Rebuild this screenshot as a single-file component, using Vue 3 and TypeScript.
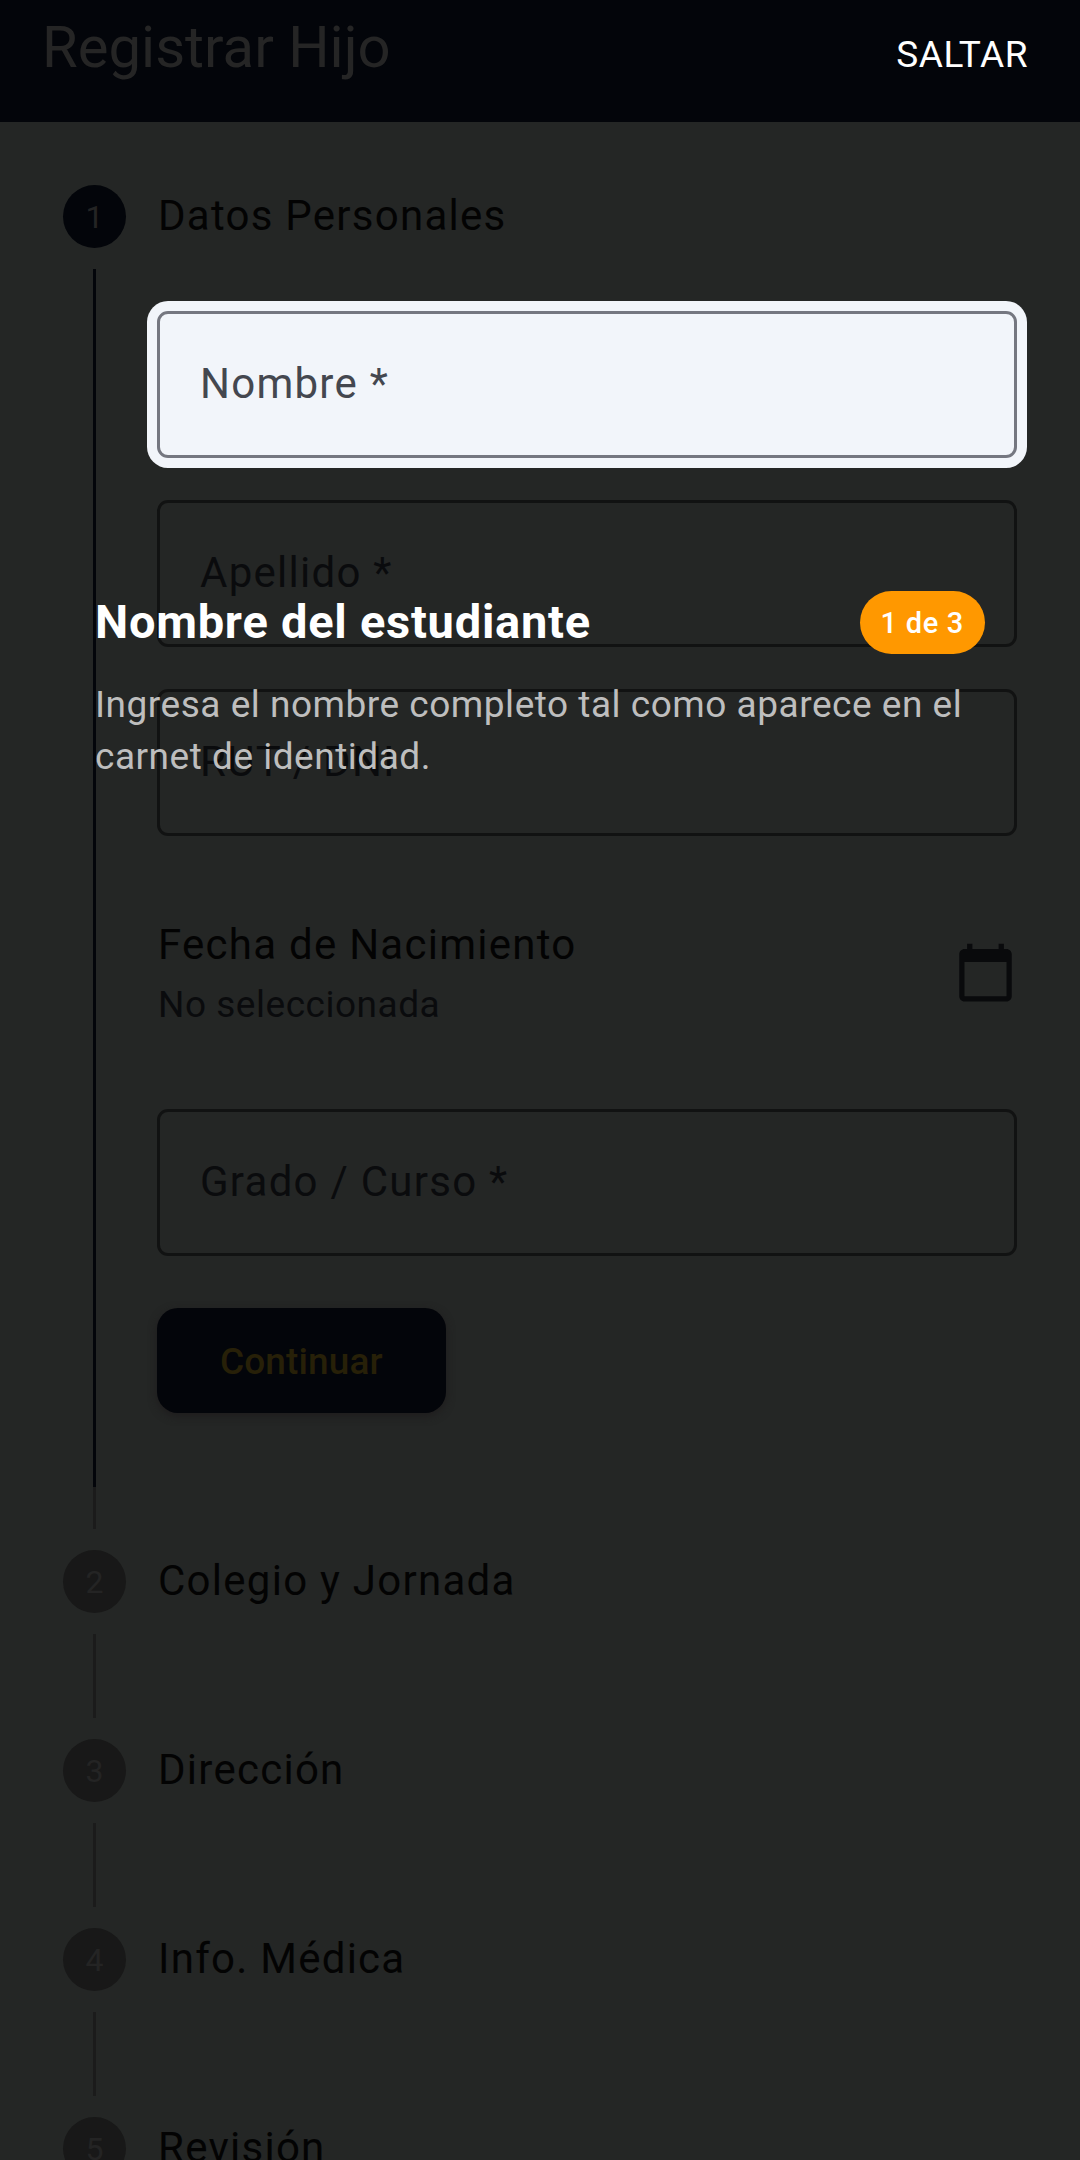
<script setup lang="ts">
import { ref } from 'vue'

interface Field {
  id: string
  label: string
  spotlight?: boolean
}

const identityFields: Field[] = [
  { id: 'nombre', label: 'Nombre *', spotlight: true },
  { id: 'apellido', label: 'Apellido *' },
  { id: 'rut', label: 'RUT / DNI' },
]
const gradeField: Field = { id: 'grado', label: 'Grado / Curso *' }

const pendingSteps: string[] = ['Colegio y Jornada', 'Dirección', 'Info. Médica', 'Revisión']

const values = ref<Record<string, string>>({ nombre: '', apellido: '', rut: '', grado: '' })
</script>

<template>
  <div class="page">
    <header class="bar">
      <h1 class="bar-title">Registrar Hijo</h1>
      <button type="button" class="skip">SALTAR</button>
    </header>

    <main>
      <ol class="stepper">
        <li>
          <div class="step-head">
            <div class="rail">
              <span class="line hidden"></span>
              <span class="circle active">1</span>
              <span class="line active"></span>
            </div>
            <h2 class="step-title">Datos Personales</h2>
          </div>
          <div class="step-body">
            <div class="rail"><span class="line active"></span></div>
            <form class="form" @submit.prevent>
              <div
                v-for="f in identityFields"
                :key="f.id"
                class="field"
                :class="{ spotlight: f.spotlight }"
              >
                <input :id="f.id" v-model="values[f.id]" type="text" />
                <label :for="f.id">{{ f.label }}</label>
              </div>
              <button type="button" class="date">
                <span class="date-text">
                  <span class="date-title">Fecha de Nacimiento</span>
                  <span class="date-value">No seleccionada</span>
                </span>
                <svg class="calendar" viewBox="0 0 24 24" aria-hidden="true">
                  <path
                    d="M20 3h-1V1h-2v2H7V1H5v2H4c-1.1 0-2 .9-2 2v16c0 1.1.9 2 2 2h16c1.1 0 2-.9 2-2V5c0-1.1-.9-2-2-2zm0 18H4V8h16v13z"
                  />
                </svg>
              </button>
              <div class="field">
                <input :id="gradeField.id" v-model="values[gradeField.id]" type="text" />
                <label :for="gradeField.id">{{ gradeField.label }}</label>
              </div>
              <button type="submit" class="continue">Continuar</button>
            </form>
          </div>
        </li>
        <li v-for="(title, i) in pendingSteps" :key="title">
          <div class="step-head">
            <div class="rail">
              <span class="line"></span>
              <span class="circle">{{ i + 2 }}</span>
              <span class="line" :class="{ hidden: i === pendingSteps.length - 1 }"></span>
            </div>
            <h2 class="step-title">{{ title }}</h2>
          </div>
        </li>
      </ol>
    </main>

    <aside class="coach" role="dialog" aria-labelledby="coach-title">
      <div class="coach-head">
        <h2 id="coach-title" class="coach-title">Nombre del estudiante</h2>
        <span class="chip">1 de 3</span>
      </div>
      <p class="coach-text">Ingresa el nombre completo tal como aparece en el carnet de identidad.</p>
    </aside>
  </div>
</template>

<style>
body {
  margin: 0;
  background: #242625;
}
</style>

<style scoped>
.page {
  position: relative;
  height: 100vh;
  overflow: hidden;
  background: #242625;
  font-family: Roboto, 'Liberation Sans', sans-serif;
}

h1,
h2,
p,
ol {
  margin: 0;
  padding: 0;
  font-weight: 400;
}

button {
  border: 0;
  padding: 0;
  background: none;
  font: inherit;
  color: inherit;
  cursor: pointer;
}

.bar {
  display: flex;
  align-items: baseline;
  justify-content: space-between;
  box-sizing: border-box;
  height: 122px;
  padding: 0 52px 0 42px;
  background: #03050a;
}

.bar-title {
  font-size: 58px;
  line-height: 94px;
  color: #252525;
}

.skip {
  font-size: 37px;
  line-height: 52px;
  letter-spacing: 0.014em;
  color: #fff;
}

.stepper {
  list-style: none;
}

.step-head,
.step-body {
  display: flex;
  gap: 31px;
  padding: 0 63px;
}

.step-head {
  gap: 32px;
  height: 189px;
  align-items: center;
}

.rail {
  display: flex;
  flex: none;
  flex-direction: column;
  align-items: center;
  align-self: stretch;
  width: 63px;
}

.line {
  flex: 1;
  width: 3px;
  background: #1b1b1b;
}

.line.active {
  background: #03050a;
}

.line.hidden {
  visibility: hidden;
}

.circle {
  width: 63px;
  height: 63px;
  margin: 21px 0;
  border-radius: 50%;
  background: #181818;
  color: #242424;
  font-size: 32px;
  line-height: 65px;
  text-align: center;
}

.circle.active {
  background: #03050a;
}

.step-title {
  padding-bottom: 2px;
  font-size: 42px;
  line-height: 63px;
  letter-spacing: 0.03em;
  color: #030303;
}

.form {
  display: flex;
  flex: 1;
  flex-direction: column;
  gap: 42px;
  padding-bottom: 74px;
}

.field {
  display: grid;
  align-items: center;
  height: 147px;
  border-radius: 11px;
}

.field input,
.field label {
  grid-area: 1 / 1;
}

.field input {
  box-sizing: border-box;
  width: 100%;
  height: 100%;
  padding: 0 40px;
  border: 3px solid #111212;
  border-radius: 11px;
  outline: 0;
  background: transparent;
  font: inherit;
  font-size: 42px;
}

.field label {
  justify-self: start;
  padding: 0 0 2px 43px;
  font-size: 42px;
  line-height: 63px;
  letter-spacing: 0.03em;
  color: #0a0b0d;
  pointer-events: none;
}

.field.spotlight {
  background: #f2f5fa;
  box-shadow: 0 0 0 10px #f2f5fa;
}

.field.spotlight input {
  border-color: #757780;
}

.field.spotlight label {
  color: #44474f;
}

.date {
  display: flex;
  align-items: center;
  justify-content: space-between;
  height: 189px;
  padding-left: 1px;
  text-align: left;
}

.date-text {
  display: flex;
  flex-direction: column;
  gap: 3px;
  padding-bottom: 1px;
}

.date-title {
  font-size: 42px;
  line-height: 63px;
  letter-spacing: 0.03em;
  color: #030303;
}

.date-value {
  font-size: 37px;
  line-height: 52px;
  letter-spacing: 0.014em;
  color: #0a0b0d;
}

.calendar {
  width: 63px;
  height: 63px;
  fill: #090a0c;
}

.continue {
  align-self: flex-start;
  height: 105px;
  margin-top: 10px;
  padding: 2px 63px 0;
  border-radius: 21px;
  background: #03050a;
  box-shadow: 0 3px 8px #1e1c1d;
  font-size: 37px;
  font-weight: 500;
  letter-spacing: 0.003em;
  color: #272008;
}

.coach {
  position: absolute;
  top: 591px;
  right: 95px;
  left: 95px;
}

.coach-head {
  display: flex;
  align-items: center;
  justify-content: space-between;
  margin-bottom: 25px;
}

.coach-title {
  padding-bottom: 2px;
  font-size: 47px;
  font-weight: 700;
  line-height: 61px;
  letter-spacing: 0.016em;
  color: #fff;
}

.chip {
  padding: 2px 21px 0;
  border-radius: 32px;
  background: #ff9800;
  font-size: 29px;
  font-weight: 500;
  line-height: 61px;
  letter-spacing: 0.024em;
  color: #fff;
}

.coach-text {
  font-size: 37px;
  line-height: 52px;
  letter-spacing: 0.014em;
  color: #bebebe;
}
</style>
